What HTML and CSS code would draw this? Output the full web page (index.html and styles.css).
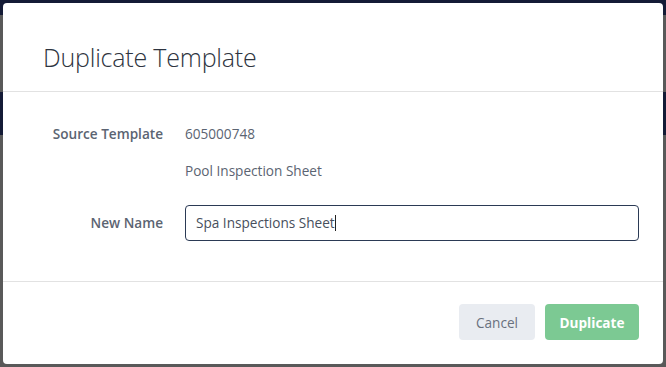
FILE: index.html
```html
<!DOCTYPE html>
<html lang="en">
<head>
<meta charset="UTF-8">
<meta name="viewport" content="width=device-width, initial-scale=1.0">
<title>Duplicate Template</title>
<link rel="stylesheet" href="styles.css">
</head>
<body>

<div class="page">
    <div class="topbar"></div>
    <div class="band"></div>
</div>

<div class="modal">
    <div class="modal-header">
        <h2>Duplicate Template</h2>
    </div>
    <div class="modal-body">
        <div class="row">
            <label class="label">Source Template</label>
            <div class="value">605000748</div>
        </div>
        <div class="row second">
            <span class="label"></span>
            <div class="value">Pool Inspection Sheet</div>
        </div>
        <div class="row third">
            <label class="label" for="newName">New Name</label>
            <div class="input-box" id="newName">Spa Inspections Sheet<span class="caret"></span></div>
        </div>
    </div>
    <div class="modal-footer">
        <button class="btn btn-cancel">Cancel</button>
        <button class="btn btn-primary">Duplicate</button>
    </div>
</div>

</body>
</html>
```

FILE: styles.css
```css
body {
    font-family: "Open Sans", Arial, sans-serif;
    margin: 0;
    padding: 0;
    background-color: #595959;
    height: 367px;
    overflow: hidden;
    position: relative;
}
.page {
    display: flex;
    flex-direction: column;
}
.topbar {
    height: 15px;
    background-color: #141b36;
}
.band {
    height: 43px;
    margin-top: 77px;
    background-color: #141b36;
}
.modal {
    position: absolute;
    top: 3px;
    left: 3px;
    width: 660px;
    height: 361px;
    background-color: #fff;
    border-radius: 4px;
    display: flex;
    flex-direction: column;
}
.modal-header {
    height: 89px;
    box-sizing: border-box;
    border-bottom: 1px solid #e2e2e2;
    padding: 0 40px;
    display: flex;
    align-items: center;
}
.modal-header h2 {
    margin: 20px 0 0 0;
    font-size: 25px;
    font-weight: 300;
    color: #2e3440;
    letter-spacing: -0.2px;
}
.modal-body {
    padding: 32px 24px 40px 0;
}
.row {
    display: flex;
    align-items: center;
    gap: 22px;
    font-size: 13.6px;
    line-height: 20px;
}
.row.second {
    margin-top: 17px;
}
.row.third {
    margin-top: 24px;
}
.label {
    width: 160px;
    text-align: right;
    font-weight: 600;
    color: #5b6472;
    flex-shrink: 0;
}
.value {
    color: #5b6472;
}
.input-box {
    flex: 1;
    height: 36px;
    box-sizing: border-box;
    border: 1px solid #2b3a55;
    border-radius: 4px;
    padding: 0 10px;
    display: flex;
    align-items: center;
    color: #474f5c;
}
.caret {
    display: inline-block;
    width: 1px;
    height: 16px;
    background-color: #222;
}
.modal-footer {
    flex: 1;
    border-top: 1px solid #e2e2e2;
    display: flex;
    justify-content: flex-end;
    align-items: flex-start;
    gap: 10px;
    padding: 22px 24px 0 0;
}
.btn {
    height: 36px;
    border: none;
    border-radius: 4px;
    font-family: "Open Sans", Arial, sans-serif;
    font-size: 13.6px;
    cursor: pointer;
}
.btn-cancel {
    width: 76px;
    background-color: #e9ecf1;
    color: #69717e;
}
.btn-primary {
    width: 94px;
    background-color: #7cc993;
    color: #fff;
    font-weight: 700;
}
```
